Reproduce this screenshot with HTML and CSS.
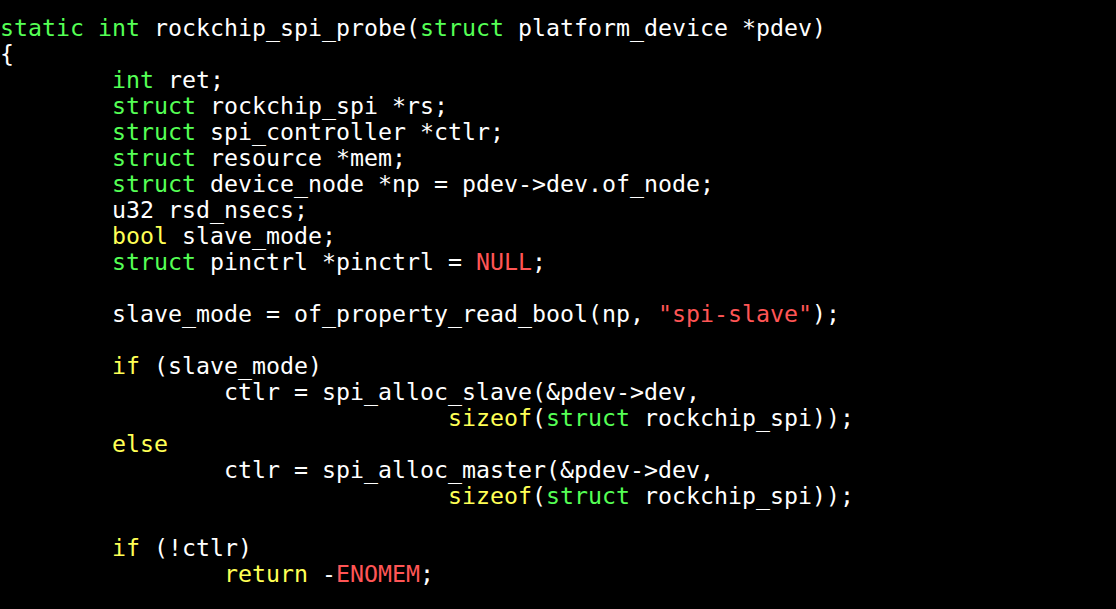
FILE: index.html
```html
<!DOCTYPE html>
<html>
<head>
<meta charset="utf-8">
<link rel="stylesheet" href="styles.css">
</head>
<body>
<pre class="code"><span class="g">static</span> <span class="g">int</span> rockchip_spi_probe(<span class="g">struct</span> platform_device *pdev)
{
        <span class="g">int</span> ret;
        <span class="g">struct</span> rockchip_spi *rs;
        <span class="g">struct</span> spi_controller *ctlr;
        <span class="g">struct</span> resource *mem;
        <span class="g">struct</span> device_node *np = pdev-&gt;dev.of_node;
        u32 rsd_nsecs;
        <span class="y">bool</span> slave_mode;
        <span class="g">struct</span> pinctrl *pinctrl = <span class="r">NULL</span>;

        slave_mode = of_property_read_bool(np, <span class="r">"spi-slave"</span>);

        <span class="y">if</span> (slave_mode)
                ctlr = spi_alloc_slave(&amp;pdev-&gt;dev,
                                <span class="y">sizeof</span>(<span class="g">struct</span> rockchip_spi));
        <span class="y">else</span>
                ctlr = spi_alloc_master(&amp;pdev-&gt;dev,
                                <span class="y">sizeof</span>(<span class="g">struct</span> rockchip_spi));

        <span class="y">if</span> (!ctlr)
                <span class="y">return</span> -<span class="r">ENOMEM</span>;
</pre>
</body>
</html>
```
FILE: styles.css
```css
html, body {
  margin: 0;
  padding: 0;
  background: #000000;
  height: 100%;
  overflow: hidden;
}

.code {
  margin: 0;
  padding: 15px 0 0 0;
  font-family: "DejaVu Sans Mono", monospace;
  font-size: 23.25px;
  line-height: 26px;
  color: #ffffff;
  white-space: pre;
}

.g { color: #55ff55; }
.y { color: #ffff55; }
.r { color: #ff5555; }
```
